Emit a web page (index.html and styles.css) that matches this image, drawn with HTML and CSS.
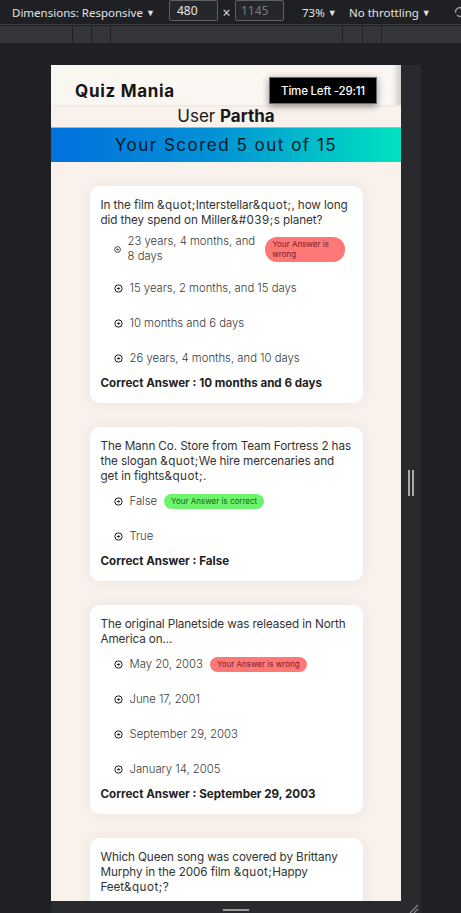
FILE: index.html
```html
<!DOCTYPE html>
<html lang="en">
<head>
<meta charset="utf-8">
<title>Quiz Mania - Results</title>
<link rel="stylesheet" href="styles.css">
</head>
<body>
<div class="devtools">
  <div class="toolbar">
    <span class="tb-item tb-dims">Dimensions: Responsive <span class="caret">&#9660;</span></span>
    <span class="tb-input">480</span>
    <span class="tb-times">&times;</span>
    <span class="tb-input tb-input-dim">1145</span>
    <span class="tb-item tb-zoom">73% <span class="caret">&#9660;</span></span>
    <span class="tb-item tb-throttle">No throttling <span class="caret">&#9660;</span></span>
    <svg class="tb-rotate" viewBox="0 0 16 16" width="14" height="14"><path d="M3 9a5 5 0 0 1 8.5-4.5M13 7a5 5 0 0 1-8.5 4.5" fill="none" stroke="#9a9a9a" stroke-width="1.6"/><path d="M11.5 1.8v3h-3" fill="none" stroke="#9a9a9a" stroke-width="1.4"/></svg>
  </div>
  <div class="ruler">
    <span class="seg seg-1"></span>
    <span class="seg seg-2"></span>
    <span class="seg seg-3"></span>
    <span class="seg seg-4"></span>
    <span class="seg seg-5"></span>
    <span class="seg seg-6"></span>
    <span class="seg seg-7"></span>
  </div>
  <div class="stage">
    <div class="device">
      <div class="viewport">
        <header class="app-header">
          <h1 class="brand">Quiz Mania</h1>
          <div class="timer">Time Left -29:11</div>
        </header>
        <p class="user-line">User <b>Partha</b></p>
        <div class="score-bar">Your Scored 5 out of 15</div>
        <main class="results">
          <section class="card">
            <p class="question">In the film <span class="ent">&amp;quot;</span>Interstellar<span class="ent">&amp;quot;</span>, how long did they spend on Miller<span class="ent">&amp;#039;</span>s planet?</p>
            <ul class="options">
              <li class="opt opt-wrapped"><svg class="opt-icon" viewBox="0 0 16 16"><circle cx="8" cy="8" r="6.5" fill="none" stroke="currentColor" stroke-width="1.7"/><path d="M5.2 8h4.6M7.8 5.6 10.2 8 7.8 10.4" fill="none" stroke="currentColor" stroke-width="1.6"/></svg><span class="opt-text">23 years, 4 months, and 8 days</span><span class="badge badge-wrong">Your Answer is wrong</span></li>
              <li class="opt"><svg class="opt-icon" viewBox="0 0 16 16"><circle cx="8" cy="8" r="6.5" fill="none" stroke="currentColor" stroke-width="1.7"/><path d="M5.2 8h4.6M7.8 5.6 10.2 8 7.8 10.4" fill="none" stroke="currentColor" stroke-width="1.6"/></svg><span class="opt-text">15 years, 2 months, and 15 days</span></li>
              <li class="opt"><svg class="opt-icon" viewBox="0 0 16 16"><circle cx="8" cy="8" r="6.5" fill="none" stroke="currentColor" stroke-width="1.7"/><path d="M5.2 8h4.6M7.8 5.6 10.2 8 7.8 10.4" fill="none" stroke="currentColor" stroke-width="1.6"/></svg><span class="opt-text">10 months and 6 days</span></li>
              <li class="opt"><svg class="opt-icon" viewBox="0 0 16 16"><circle cx="8" cy="8" r="6.5" fill="none" stroke="currentColor" stroke-width="1.7"/><path d="M5.2 8h4.6M7.8 5.6 10.2 8 7.8 10.4" fill="none" stroke="currentColor" stroke-width="1.6"/></svg><span class="opt-text">26 years, 4 months, and 10 days</span></li>
            </ul>
            <p class="correct">Correct Answer : 10 months and 6 days</p>
          </section>

          <section class="card">
            <p class="question">The Mann Co. Store from Team Fortress 2 has the slogan <span class="ent">&amp;quot;</span>We hire mercenaries and get in fights<span class="ent">&amp;quot;</span>.</p>
            <ul class="options">
              <li class="opt"><svg class="opt-icon" viewBox="0 0 16 16"><circle cx="8" cy="8" r="6.5" fill="none" stroke="currentColor" stroke-width="1.7"/><path d="M5.2 8h4.6M7.8 5.6 10.2 8 7.8 10.4" fill="none" stroke="currentColor" stroke-width="1.6"/></svg><span class="opt-text">False</span><span class="badge badge-correct">Your Answer is correct</span></li>
              <li class="opt"><svg class="opt-icon" viewBox="0 0 16 16"><circle cx="8" cy="8" r="6.5" fill="none" stroke="currentColor" stroke-width="1.7"/><path d="M5.2 8h4.6M7.8 5.6 10.2 8 7.8 10.4" fill="none" stroke="currentColor" stroke-width="1.6"/></svg><span class="opt-text">True</span></li>
            </ul>
            <p class="correct">Correct Answer : False</p>
          </section>

          <section class="card">
            <p class="question">The original Planetside was released in North America on...</p>
            <ul class="options">
              <li class="opt"><svg class="opt-icon" viewBox="0 0 16 16"><circle cx="8" cy="8" r="6.5" fill="none" stroke="currentColor" stroke-width="1.7"/><path d="M5.2 8h4.6M7.8 5.6 10.2 8 7.8 10.4" fill="none" stroke="currentColor" stroke-width="1.6"/></svg><span class="opt-text">May 20, 2003</span><span class="badge badge-wrong">Your Answer is wrong</span></li>
              <li class="opt"><svg class="opt-icon" viewBox="0 0 16 16"><circle cx="8" cy="8" r="6.5" fill="none" stroke="currentColor" stroke-width="1.7"/><path d="M5.2 8h4.6M7.8 5.6 10.2 8 7.8 10.4" fill="none" stroke="currentColor" stroke-width="1.6"/></svg><span class="opt-text">June 17, 2001</span></li>
              <li class="opt"><svg class="opt-icon" viewBox="0 0 16 16"><circle cx="8" cy="8" r="6.5" fill="none" stroke="currentColor" stroke-width="1.7"/><path d="M5.2 8h4.6M7.8 5.6 10.2 8 7.8 10.4" fill="none" stroke="currentColor" stroke-width="1.6"/></svg><span class="opt-text">September 29, 2003</span></li>
              <li class="opt"><svg class="opt-icon" viewBox="0 0 16 16"><circle cx="8" cy="8" r="6.5" fill="none" stroke="currentColor" stroke-width="1.7"/><path d="M5.2 8h4.6M7.8 5.6 10.2 8 7.8 10.4" fill="none" stroke="currentColor" stroke-width="1.6"/></svg><span class="opt-text">January 14, 2005</span></li>
            </ul>
            <p class="correct">Correct Answer : September 29, 2003</p>
          </section>

          <section class="card">
            <p class="question">Which Queen song was covered by Brittany Murphy in the 2006 film <span class="ent">&amp;quot;</span>Happy Feet<span class="ent">&amp;quot;</span>?</p>
          </section>
        </main>
      </div>
      <div class="side-handle"><span class="grip"></span><span class="grip"></span></div>
    </div>
    <div class="bottom-handle">
      <span class="bottom-grip"></span>
      <svg class="corner-grip" viewBox="0 0 10 10" width="10" height="10"><path d="M2 10 10 2M6 10 10 6" stroke="#8d8d8d" stroke-width="1.2"/></svg>
    </div>
  </div>
</div>
</body>
</html>
```

FILE: styles.css
```css
* { box-sizing: border-box; }

html, body {
  margin: 0;
  padding: 0;
  background: #1f2023;
  width: 461px;
  height: 913px;
  overflow: hidden;
}

.devtools {
  width: 461px;
  height: 913px;
  display: flex;
  flex-direction: column;
  font-family: "Noto Sans", "Open Sans", sans-serif;
}

/* ---------- toolbar ---------- */
.toolbar {
  height: 25px;
  flex: none;
  display: flex;
  align-items: center;
  background: #1f2023;
  border-bottom: 1px solid #3d3e42;
  color: #e3e3e3;
  font-size: 11.5px;
  white-space: nowrap;
  overflow: hidden;
}
.tb-item { display: inline-flex; align-items: center; gap: 3px; flex: none; }
.caret { font-size: 9px; color: #e3e3e3; }
.tb-dims { margin-left: 12px; width: 157px; }
.tb-input {
  flex: none;
  width: 49px;
  height: 21px;
  margin-top: -3px;
  border: 1px solid #5f6064;
  border-radius: 2px;
  background: #26272a;
  padding-left: 7px;
  line-height: 19px;
  font-size: 12px;
  color: #e8e8e8;
}
.tb-times { flex: none; width: 17px; text-align: center; font-size: 14px; color: #d8d8d8; }
.tb-input-dim { color: #7b7b7b; padding-left: 5px; }
.tb-zoom { margin-left: 18px; width: 47px; }
.tb-throttle { width: 101px; }
.tb-rotate { flex: none; margin-left: 3px; }

.ruler {
  margin-top: 1px;
  height: 17px;
  flex: none;
  display: flex;
  background: #35363a;
}
.seg { height: 100%; border-left: 1px solid #1f2023; }
.seg-1 { width: 72px; border-left: 0; }
.seg-2 { width: 19px; }
.seg-3 { width: 19px; }
.seg-4 { width: 232px; }
.seg-5 { width: 20px; }
.seg-6 { width: 19px; }
.seg-7 { flex: 1; }

/* ---------- stage ---------- */
.stage {
  flex: 1;
  padding: 22px 0 0 51px;
  display: flex;
  flex-direction: column;
  min-height: 0;
}
.device {
  display: flex;
  height: 836px;
  flex: none;
}
.viewport {
  width: 350px;
  height: 836px;
  overflow: hidden;
  background: #f8f1ec;
  font-family: "Inter", "Noto Sans", sans-serif;
  color: #222;
}
.side-handle {
  width: 20px;
  background: #292a2e;
  display: flex;
  justify-content: center;
  align-items: center;
  gap: 2px;
}
.grip {
  width: 2px;
  height: 26px;
  background: #a7a9ad;
}
.bottom-handle {
  width: 370px;
  height: 12px;
  background: #292a2e;
  display: flex;
  align-items: center;
  justify-content: center;
  position: relative;
}
.bottom-grip {
  width: 26px;
  height: 2px;
  background: #9b9b9b;
  margin-top: 5px;
}
.corner-grip {
  position: absolute;
  right: 3px;
  bottom: 0;
}

/* ---------- page ---------- */
.app-header {
  height: 40px;
  padding: 12px 24px 1px;
  display: flex;
  align-items: center;
  justify-content: space-between;
  background: linear-gradient(to right, #faf6f2 calc(100% - 9px), #cfcccb 100%);
  box-shadow: 0 1px 2px rgba(0, 0, 0, 0.06);
  position: relative;
}
.brand {
  margin: 0;
  font-size: 17px;
  font-weight: 700;
  letter-spacing: 0.7px;
  color: #151515;
}
.timer {
  width: 108px;
  height: 27px;
  display: flex;
  align-items: center;
  justify-content: center;
  background: #000;
  color: #fff;
  font-size: 11.5px;
  font-weight: 500;
  letter-spacing: -0.2px;
  border: 1px solid #6a6a6a;
  box-shadow: 0 2px 7px rgba(0, 0, 0, 0.45);
}
.user-line {
  margin: 0;
  height: 22px;
  line-height: 22px;
  text-align: center;
  font-size: 17px;
  color: #1a1a1a;
}
.user-line b { font-weight: 700; }
.score-bar {
  height: 35px;
  display: flex;
  align-items: center;
  justify-content: center;
  background: linear-gradient(to right, #0071de 0%, #0390d6 45%, #00e2bf 100%);
  border-top: 1px solid #7fc4f0;
  font-size: 17px;
  letter-spacing: 1.5px;
  color: #081828;
}

.results {
  padding-top: 24px;
  display: flex;
  flex-direction: column;
  align-items: center;
  gap: 24px;
}
.card {
  width: 273px;
  background: #fff;
  border-radius: 10px;
  padding: 12px 11px 12px;
  box-shadow: 0 0 14px rgba(120, 80, 60, 0.07);
}
.question {
  margin: 0 0 10px;
  font-size: 11.7px;
  letter-spacing: -0.1px;
  line-height: 15px;
  color: #333;
}
.ent { letter-spacing: 0.45px; }
.options {
  list-style: none;
  margin: 0 0 10px;
  padding: 0 7px 0 13px;
  display: flex;
  flex-direction: column;
  gap: 20px;
}
.opt {
  display: flex;
  align-items: center;
  gap: 7px;
  min-height: 15px;
}
.opt-wrapped { margin: -4px 0 -3px; }
.opt-icon {
  flex: 0 1 9px;
  width: 9px;
  height: 9px;
  min-width: 0;
  color: #111;
}
.opt-text {
  flex: 0 1 auto;
  font-size: 11.3px;
  line-height: 15px;
  font-weight: 300;
  color: #3a3a3a;
}
.badge {
  flex: 0 1 auto;
  min-width: 0;
  padding: 2px 7px;
  border-radius: 12px;
  font-size: 8px;
  line-height: 10.5px;
}
.badge-wrong { background: #ff7878; color: #7a1c1c; }
.badge-correct { background: #6cf46c; color: #1d5a1d; }
.correct {
  margin: 0;
  font-size: 11.6px;
  line-height: 15px;
  font-weight: 700;
  color: #222;
}
```
